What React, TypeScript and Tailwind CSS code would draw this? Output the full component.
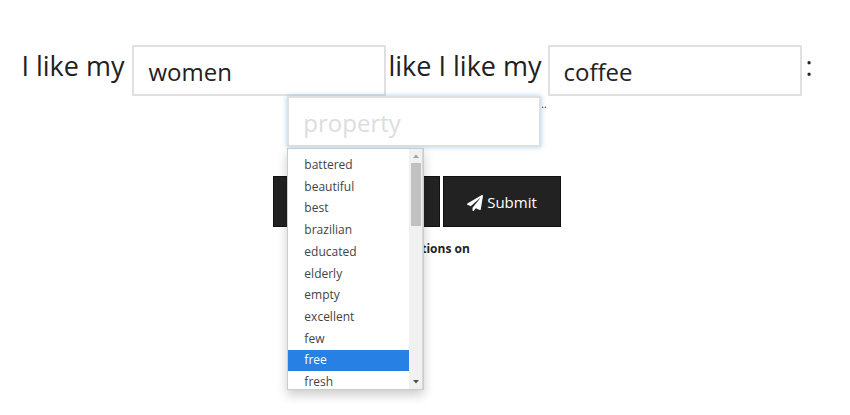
import { useState } from "react";
import { FaLightbulb, FaPaperPlane, FaRandom } from "react-icons/fa";
import { clsx } from "clsx";

const properties = [
  "battered",
  "beautiful",
  "best",
  "brazilian",
  "educated",
  "elderly",
  "empty",
  "excellent",
  "few",
  "free",
  "fresh",
];

const inputClass =
  "w-[254px] h-[51px] border-2 border-[#dfe0e0] bg-white px-3.5 pt-0.5 text-2xl text-[#222] outline-none placeholder:text-[#dcdddd]";

const buttonClass =
  "flex h-[51px] items-center justify-center gap-1 border border-[#111] bg-[#222] pt-0.5 text-[15px] text-white";

function Suggestions({ selected, onSelect }: { selected: string; onSelect: (value: string) => void }) {
  return (
    <div className="absolute top-full left-0 z-10 mt-px flex h-[242px] w-[137px] overflow-hidden border border-[#ccc] border-t-[#b5cfe6] bg-white shadow-[0_5px_10px_rgba(0,0,0,0.2)]">
      <ul id="properties" role="listbox" aria-label="property" className="flex h-[244px] flex-1 flex-col pt-[5px]">
        {properties.map((item) => (
          <li
            key={item}
            role="option"
            aria-selected={item === selected}
            onMouseEnter={() => onSelect(item)}
            className={clsx(
              "flex flex-1 cursor-pointer items-center pl-4 text-xs",
              item === selected ? "bg-[#2780e3] text-white" : "text-[#444]"
            )}
          >
            {item}
          </li>
        ))}
      </ul>
      <div aria-hidden="true" className="flex w-3.5 flex-col items-center border-r border-[#d8d8d8] bg-[#f1f1f1]">
        <svg viewBox="0 0 12 14" className="h-3.5 w-3 shrink-0">
          <path d="M3 9h6L6 5.5z" fill="#a3a3a3" />
        </svg>
        <div className="h-[63px] w-2.5 shrink-0 bg-[#c1c1c1]" />
        <svg viewBox="0 0 12 14" className="mt-auto h-3.5 w-3 shrink-0">
          <path d="M3 5h6L6 8.5z" fill="#505050" />
        </svg>
      </div>
    </div>
  );
}

export default function App() {
  const [first, setFirst] = useState("women");
  const [second, setSecond] = useState("coffee");
  const [property, setProperty] = useState("");
  const [selected, setSelected] = useState("free");

  return (
    <main className="min-h-screen bg-white pt-[45px] pr-4 font-['Open_Sans','Noto_Sans',sans-serif] text-[#222]">
      <form onSubmit={(e) => e.preventDefault()}>
        <div className="flex flex-wrap justify-center text-[27px] leading-[42px]">
          <label htmlFor="first" className="mr-2">I like my</label>
          <input id="first" className={inputClass} value={first} onChange={(e) => setFirst(e.target.value)} />
          <label htmlFor="second" className="mr-1.5 ml-0.5">like I like my</label>
          <input id="second" className={inputClass} value={second} onChange={(e) => setSecond(e.target.value)} />
          <span className="ml-1">:</span>
        </div>

        <div className="flex justify-center">
          <div className="relative">
            <input
              role="combobox"
              aria-label="property"
              aria-expanded="true"
              aria-controls="properties"
              placeholder="property"
              className={clsx(inputClass, "block shadow-[0_0_5px_rgba(102,175,233,0.6)]")}
              value={property}
              onChange={(e) => setProperty(e.target.value)}
            />
            <Suggestions selected={selected} onSelect={setSelected} />
          </div>
          <span className="text-[10px] leading-4">..</span>
        </div>

        <div className="mt-[29px] flex justify-center gap-[3px]">
          <button type="button" className={clsx(buttonClass, "w-[167px]")}>
            <FaRandom />
            Random
          </button>
          <button type="submit" className={clsx(buttonClass, "w-[118px]")}>
            <FaPaperPlane className="size-4" />
            Submit
          </button>
        </div>
      </form>

      <p className="mt-3 flex items-center justify-center gap-1 text-xs leading-5 font-bold">
        <FaLightbulb />
        Suggestions on
      </p>
    </main>
  );
}
